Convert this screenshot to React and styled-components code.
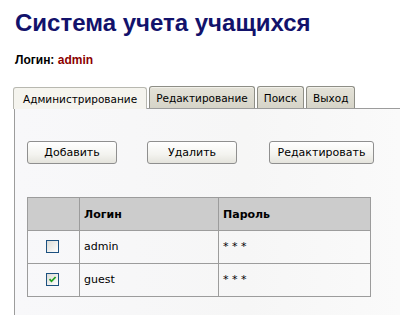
import styled, { createGlobalStyle } from "styled-components";

const GlobalStyle = createGlobalStyle`
  html, body {
    margin: 0;
    padding: 0;
    background: #ffffff;
  }
  body {
    width: 400px;
    height: 315px;
    overflow: hidden;
    font-family: "DejaVu Sans", "Liberation Sans", sans-serif;
  }
`;

const Page = styled.div`
  padding: 9px 0 0 13px;
`;

const Title = styled.h1`
  margin: 0 0 0 2px;
  font-family: "Liberation Sans", Arial, sans-serif;
  font-size: 24px;
  font-weight: bold;
  color: #12126b;
  line-height: 28px;
`;

const UserLine = styled.div`
  margin: 16px 0 0 2px;
  font-family: "Liberation Sans", Arial, sans-serif;
  font-size: 12px;
  font-weight: bold;
  color: #000;
  line-height: 14px;
`;

const UserName = styled.span`
  color: #8b0000;
`;

const TabBar = styled.div`
  display: flex;
  align-items: flex-end;
  gap: 2px;
  margin-top: 19px;
  border-bottom: 1px solid #9c9c9c;
  height: 22px;
`;

const Tab = styled.div`
  height: 21px;
  padding: 0 ${({ $active }) => ($active ? 9 : 6)}px;
  display: flex;
  align-items: center;
  font-size: 10.5px;
  color: #000;
  border: 1px solid ${({ $active }) => ($active ? "#b8b8b0" : "#8e8e86")};
  border-bottom: none;
  border-radius: 3px 3px 0 0;
  background: ${({ $active }) =>
    $active ? "#f5f4ee" : "linear-gradient(#e4e2d8, #d6d4c8)"};
  box-shadow: ${({ $active }) => ($active ? "none" : "inset 0 1px 0 #f2f1ea")};
  margin-bottom: ${({ $active }) => ($active ? "-1px" : "0")};
  position: relative;
`;

const Panel = styled.div`
  box-sizing: border-box;
  border-left: 1px solid #9c9c9c;
  margin-left: 1px;
  height: 206px;
  background: linear-gradient(90deg, #f8f8fa, #f6f6f6 60%, #fafafa);
  padding: 32px 0 0 12px;
`;

const ButtonRow = styled.div`
  display: flex;
`;

const Button = styled.button`
  width: ${({ $w }) => $w}px;
  margin-right: ${({ $gap }) => $gap}px;
  height: 23px;
  padding: 0;
  font-family: "DejaVu Sans", "Liberation Sans", sans-serif;
  font-size: 11px;
  color: #000;
  border: 1px solid #8f8f8f;
  border-radius: 3px;
  background: linear-gradient(#ffffff, #f3f3ef 60%, #e4e3dc);
  cursor: pointer;
`;

const Table = styled.table`
  margin-top: 33px;
  border-collapse: collapse;
  table-layout: fixed;
  width: 344px;
  font-size: 11px;
`;

const HeadCell = styled.th`
  height: 32px;
  background: #cccccc;
  border: 1px solid #9c9c9c;
  text-align: left;
  padding: 0 4px;
  font-weight: bold;
  width: ${({ $w }) => ($w ? `${$w}px` : "auto")};
`;

const Cell = styled.td`
  height: 30px;
  border: 1px solid #9c9c9c;
  padding: 0 4px 2px;
  text-align: ${({ $center }) => ($center ? "center" : "left")};
  vertical-align: middle;
`;

const CheckBox = styled.span`
  display: inline-flex;
  align-items: center;
  justify-content: center;
  box-sizing: border-box;
  width: 13px;
  height: 13px;
  border: 1px solid #1c5180;
  background: linear-gradient(135deg, #dcdcd6, #ffffff);
  vertical-align: middle;
  margin-left: -2px;
`;

function Check({ checked }) {
  return (
    <CheckBox>
      {checked && (
        <svg width="9" height="9" viewBox="0 0 9 9">
          <path d="M1.5 4.2 L3.5 6.3 L7.6 2" stroke="#21a121" strokeWidth="1.8" fill="none" />
        </svg>
      )}
    </CheckBox>
  );
}

const users = [
  { login: "admin", checked: false },
  { login: "guest", checked: true },
];

export default function App() {
  return (
    <>
      <GlobalStyle />
      <Page>
        <Title>Система учета учащихся</Title>
        <UserLine>
          Логин: <UserName>admin</UserName>
        </UserLine>
        <TabBar>
          <Tab $active>Администрирование</Tab>
          <Tab>Редактирование</Tab>
          <Tab>Поиск</Tab>
          <Tab>Выход</Tab>
        </TabBar>
        <Panel>
          <ButtonRow>
            <Button $w={90} $gap={30}>Добавить</Button>
            <Button $w={90} $gap={32}>Удалить</Button>
            <Button $w={105} $gap={0}>Редактировать</Button>
          </ButtonRow>
          <Table>
            <thead>
              <tr>
                <HeadCell $w={43}></HeadCell>
                <HeadCell $w={130}>Логин</HeadCell>
                <HeadCell>Пароль</HeadCell>
              </tr>
            </thead>
            <tbody>
              {users.map((u) => (
                <tr key={u.login}>
                  <Cell $center>
                    <Check checked={u.checked} />
                  </Cell>
                  <Cell>{u.login}</Cell>
                  <Cell>* * *</Cell>
                </tr>
              ))}
            </tbody>
          </Table>
        </Panel>
      </Page>
    </>
  );
}
